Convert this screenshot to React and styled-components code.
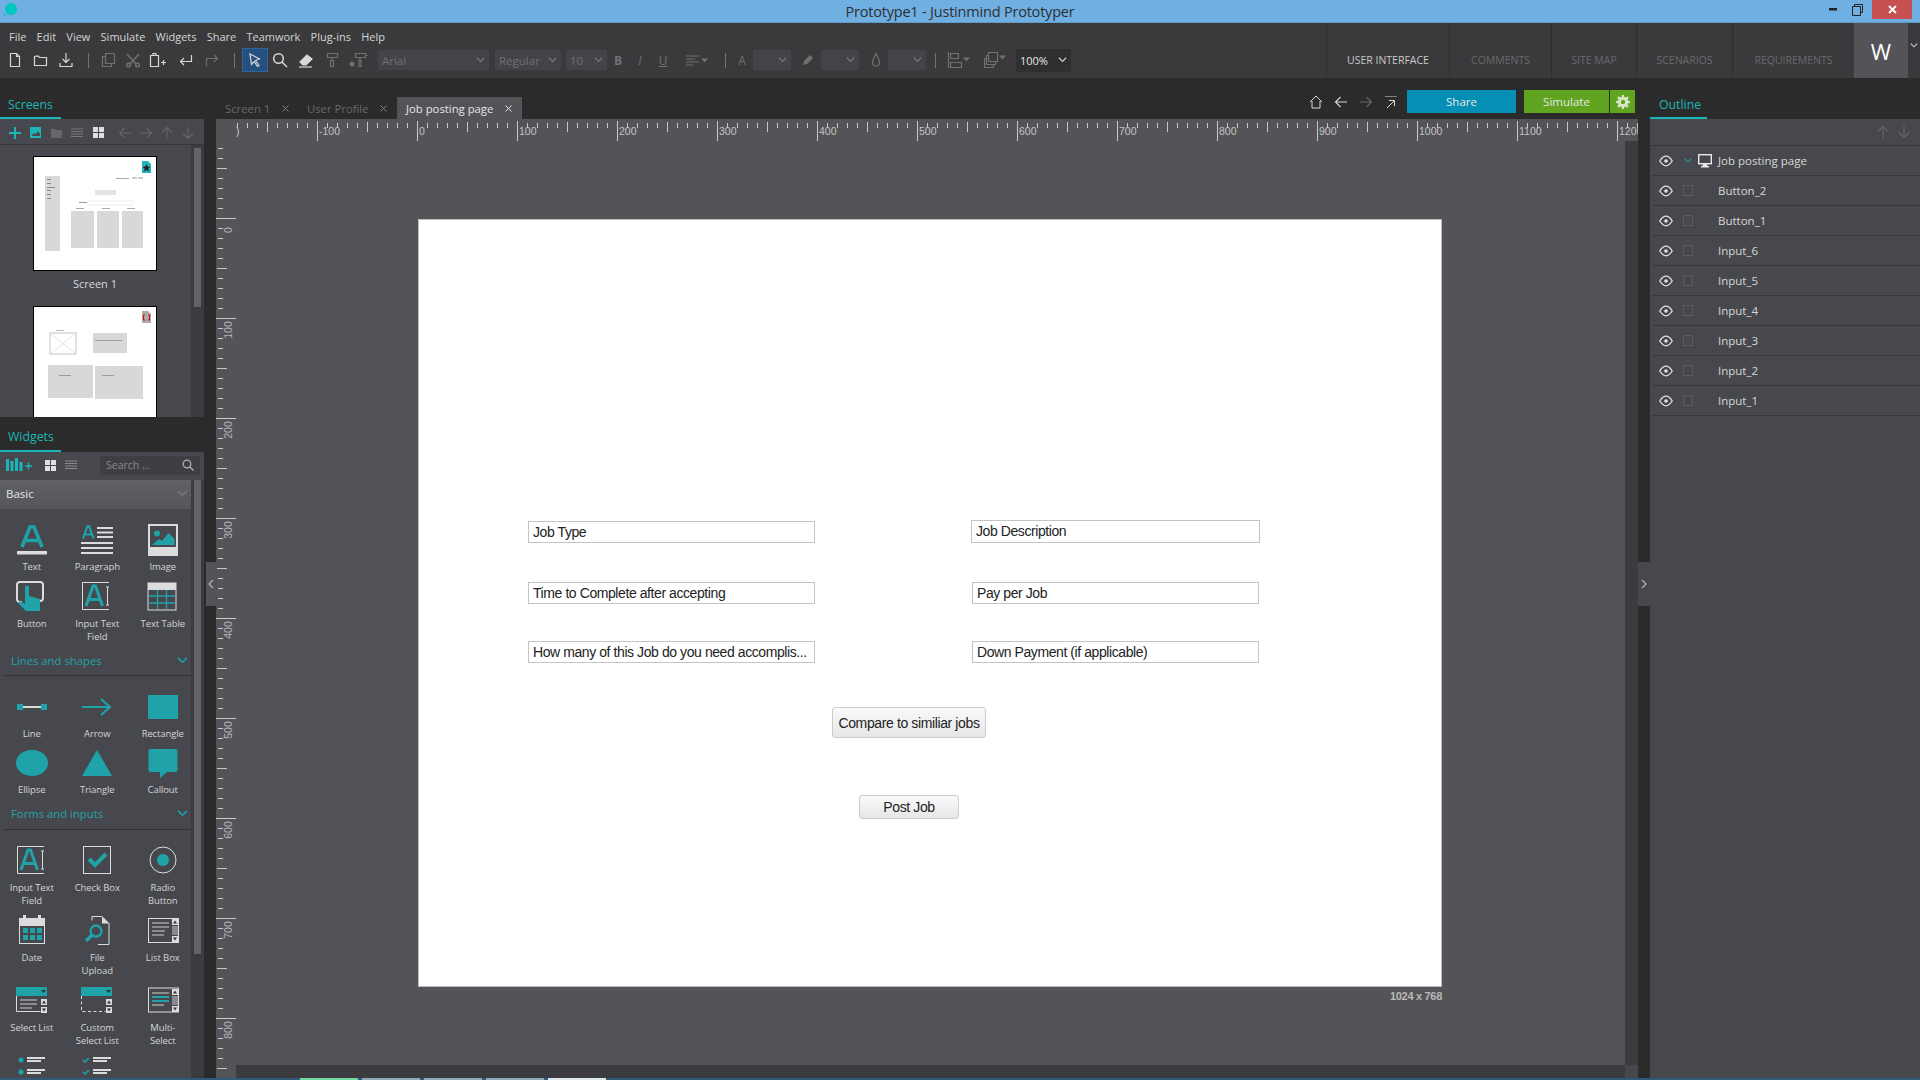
import React from "react";
import styled, { createGlobalStyle } from "styled-components";

const TEAL = "#1fa3a9";
const WHITE = "#dcdcdc";
const UI = `"Open Sans", "Noto Sans", sans-serif`;

const GlobalStyle = createGlobalStyle`
  html, body { margin: 0; padding: 0; background: #2b2b2b; }
  body { font-family: ${UI}; overflow: hidden; }
  * { box-sizing: border-box; }
`;

const Shell = styled.div`
  width: 1920px;
  height: 1080px;
  display: flex;
  flex-direction: column;
  overflow: hidden;
`;

/* ---- title bar ---- */
const TitleBar = styled.div`
  flex: none;
  height: 23px;
  background: #70afe2;
  border-bottom: 1px solid #5f9cc9;
  display: grid;
  grid-template-columns: 1fr auto 1fr;
  align-items: center;
`;
const AppLogo = styled.svg`
  display: block;
  margin-left: 2px;
`;
const TitleText = styled.div`
  font-size: 14.5px;
  color: #2e2e2e;
  letter-spacing: -0.2px;
`;
const WindowControls = styled.div`
  display: flex;
  justify-content: flex-end;
  align-self: start;
  margin-right: 8px;
`;
const WinBtn = styled.div`
  width: ${(p) => p.$w || 25}px;
  height: 19px;
  display: flex;
  align-items: center;
  justify-content: center;
  margin-left: ${(p) => p.$ml || 0}px;
  background: ${(p) => p.$close ? "#c75050" : "transparent"};
`;

/* ---- top bar ---- */
const TopBar = styled.div`
  flex: none;
  height: 55px;
  background: #3a3a3c;
  display: flex;
`;
const TopLeft = styled.div`
  flex: 1;
  min-width: 0;
`;
const MenuRow = styled.div`
  height: 24px;
  display: flex;
  align-items: center;
  padding: 2px 0 0 9px;
  gap: 10.2px;
  font-size: 11px;
  color: #d4d4d4;
`;
const ToolRow = styled.div`
  display: flex;
  align-items: center;
  height: 26px;
  padding-left: 2px;
`;
const ToolBtn = styled.div`
  flex: none;
  width: ${(p) => p.$w || 26}px;
  height: 24px;
  margin-left: ${(p) => p.$ml || 0}px;
  display: flex;
  align-items: center;
  justify-content: center;
  color: ${(p) => p.$off ? "#707073" : "#d8d8d8"};
  font-size: 12px;
  font-weight: ${(p) => p.$bold ? 700 : 400};
  font-style: ${(p) => p.$it ? "italic" : "normal"};
  background: ${(p) => p.$on ? "#25507f" : "transparent"};
  border: ${(p) => p.$on ? "1px solid #2f639b" : "none"};
`;
const ToolSep = styled.div`
  flex: none;
  width: ${(p) => p.$w || 16}px;
  margin-left: ${(p) => p.$ml || 0}px;
  height: 15px;
  position: relative;
  display: flex;
  justify-content: center;
  &::after { content: ""; width: 1px; height: 15px; background: #727275; }
`;
const Combo = styled.div`
  flex: none;
  width: ${(p) => p.$w}px;
  height: ${(p) => p.$dark ? 23 : 20}px;
  margin-left: ${(p) => p.$ml || 0}px;
  background: ${(p) => p.$dark ? "#2f2f31" : "#434448"};
  color: ${(p) => p.$dark ? "#e4e4e4" : "#6f7074"};
  font-size: ${(p) => p.$dark ? 11 : 11.5}px;
  display: flex;
  align-items: center;
  justify-content: space-between;
  padding: 0 4px;
`;
const NavTabs = styled.div`
  flex: none;
  display: flex;
`;
const NavTab = styled.div`
  width: ${(p) => p.$w}px;
  border-left: 1px solid #2e2e30;
  padding-top: 30px;
  text-align: center;
  font-size: 10.5px;
  white-space: nowrap;
  color: ${(p) => p.$active ? "#c9c9c9" : "#69696c"};
`;
const Workspace = styled.div`
  width: 54px;
  background: #545358;
  color: #fff;
  font-size: 22px;
  display: flex;
  align-items: center;
  justify-content: center;
`;
const NavChevron = styled.div`
  width: 12px;
  padding: 8px 0 0 2px;
`;

/* ---- main layout ---- */
const Main = styled.div`
  flex: 1;
  min-height: 0;
  display: flex;
  background: #2b2b2b;
`;
const LeftPanel = styled.div`
  flex: none;
  width: 204px;
  display: flex;
  flex-direction: column;
`;
const PanelTabBar = styled.div`
  flex: none;
  height: ${(p) => p.$h}px;
  background: #2b2b2b;
  display: flex;
  align-items: flex-end;
`;
const PanelTab = styled.div`
  width: ${(p) => p.$w}px;
  height: 26px;
  color: #1cb6b8;
  font-size: 12.3px;
  padding-left: ${(p) => p.$pl || 8}px;
  border-bottom: 2px solid #1cb6b8;
  line-height: ${(p) => p.$lh || 24}px;
`;
const SmallBar = styled.div`
  flex: none;
  height: ${(p) => p.$h || 26}px;
  background: #47484d;
  border-bottom: ${(p) => p.$line ? "1px solid #36363a" : "none"};
  padding: ${(p) => p.$pt || 0}px 0 ${(p) => p.$pb || 0}px;
  position: relative;
  display: flex;
  align-items: center;
`;
const BarIcon = styled.div`
  flex: none;
  width: ${(p) => p.$w || 21}px;
  margin-left: ${(p) => p.$ml || 0}px;
  display: flex;
  justify-content: center;
`;
const ScrollBody = styled.div`
  flex: ${(p) => p.$fill ? 1 : "none"};
  height: ${(p) => p.$h ? `${p.$h}px` : "auto"};
  min-height: 0;
  display: flex;
  background: #47484d;
  overflow: hidden;
`;
const ScrollContent = styled.div`
  width: 191px;
  flex: none;
  overflow: hidden;
`;
const ScrollTrack = styled.div`
  width: 13px;
  flex: none;
  background: #3c3c40;
  padding: ${(p) => p.$pt || 0}px 3px 0;
`;
const ScrollThumb = styled.div`
  width: 7px;
  height: ${(p) => p.$h}px;
  background: #626367;
`;

/* screens list */
const ThumbList = styled.div`
  padding: 11px 0 0 33px;
`;
const Thumb = styled.div`
  width: 124px;
  height: 115px;
  background: #fff;
  border: 1px solid #000;
  outline: 1px solid #000;
  outline-offset: -1px;
`;
const ThumbLabel = styled.div`
  width: 124px;
  height: 26px;
  margin-bottom: 9px;
  font-size: 11px;
  line-height: 26px;
  text-align: center;
  color: #d8d8d8;
`;

/* widgets */
const SearchBox = styled.div`
  flex: none;
  width: 100px;
  height: 19px;
  margin-left: 22px;
  background: #3e3f43;
  color: #8a8b8f;
  font-size: 10.5px;
  padding: 0 6px;
  display: flex;
  align-items: center;
  justify-content: space-between;
`;
const BasicHead = styled.div`
  height: 29px;
  background: linear-gradient(#5f6165, #55565a);
  color: #e4e4e4;
  font-size: 11.5px;
  display: flex;
  align-items: center;
  justify-content: space-between;
  padding: 0 3px 2px 6px;
`;
const SectionHead = styled.div`
  height: ${(p) => p.$h}px;
  margin-left: 4px;
  border-bottom: 1px solid #333437;
  color: ${TEAL};
  font-size: 11.3px;
  display: flex;
  justify-content: space-between;
  align-items: center;
  padding: 2px 3px 0 7px;
`;
const WidgetGrid = styled.div`
  display: grid;
  grid-template-columns: repeat(3, 65.5px);
  row-gap: 7px;
  padding-top: ${(p) => p.$pt}px;
  margin-left: -1px;
`;
const WidgetCell = styled.div`
  display: flex;
  flex-direction: column;
  align-items: center;
`;
const WidgetIcon = styled.svg`
  display: block;
  flex: none;
`;
const WidgetLabel = styled.div`
  margin-top: 4px;
  font-size: 9.5px;
  line-height: 13.5px;
  text-align: center;
  color: #d4d4d4;
  white-space: pre-line;
  letter-spacing: -0.1px;
`;

/* collapse handles */
const Gutter = styled.div`
  flex: none;
  width: 12px;
  background: #2b2b2b;
  position: relative;
`;
const Handle = styled.div`
  position: absolute;
  top: ${(p) => p.$top}px;
  left: ${(p) => p.$left}px;
  width: ${(p) => p.$w}px;
  height: 44px;
  background: ${(p) => p.$bg};
  display: flex;
  align-items: center;
  justify-content: center;
`;

/* centre */
const Centre = styled.div`
  flex: none;
  width: 1434px;
  display: flex;
  flex-direction: column;
  position: relative;
`;
const TabStrip = styled.div`
  flex: none;
  height: 41px;
  display: flex;
  align-items: flex-end;
  padding-right: 15px;
`;
const DocTab = styled.div`
  flex: none;
  width: ${(p) => p.$w}px;
  height: 22px;
  display: flex;
  align-items: center;
  padding-left: 9px;
  font-size: 11.3px;
  background: ${(p) => p.$active ? "#545358" : "transparent"};
  color: ${(p) => p.$active ? "#e6e6e6" : "#69696c"};
`;
const DocClose = styled.span`
  margin-left: ${(p) => p.$ml}px;
  display: flex;
`;
const StripTools = styled.div`
  margin-left: auto;
  align-self: stretch;
  display: flex;
  align-items: center;
  padding-top: 6px;
`;
const StripIcon = styled.div`
  width: 25px;
  display: flex;
  justify-content: center;
`;
const ActionBtn = styled.div`
  width: ${(p) => p.$w}px;
  height: 23px;
  margin-left: ${(p) => p.$ml || 0}px;
  background: ${(p) => p.$bg};
  color: #e6e6e6;
  font-size: 11.5px;
  display: flex;
  align-items: center;
  justify-content: center;
`;
const CanvasGrid = styled.div`
  flex: 1;
  min-height: 0;
  margin-right: 12px;
  display: grid;
  grid-template-columns: 20px 1fr 13px;
  grid-template-rows: 22px 1fr 13px;
  background: #545358;
`;
const HRuler = styled.svg`
  grid-column: 1 / 4;
  grid-row: 1;
  display: block;
  font-family: "Liberation Sans", sans-serif;
  font-size: 10.5px;
`;
const VRuler = styled.svg`
  grid-column: 1;
  grid-row: 2 / 4;
  display: block;
  font-family: "Liberation Sans", sans-serif;
  font-size: 10.5px;
`;
const Stage = styled.div`
  grid-column: 2;
  grid-row: 2;
  overflow: hidden;
  padding: 78px 0 0 182px;
`;
const VScroll = styled.div`
  grid-column: 3;
  grid-row: 2;
  background: #3c3c40;
`;
const HScroll = styled.div`
  grid-column: 2;
  grid-row: 3;
  background: #3c3c40;
`;
const ScrollCorner = styled.div`
  grid-column: 3;
  grid-row: 3;
  background: #47484d;
`;
const Page = styled.div`
  position: relative;
  width: 1024px;
  height: 768px;
  background: #fff;
  box-shadow: inset 0 0 0 1px #bdbdbd;
`;
const PageSize = styled.div`
  width: 1024px;
  margin-top: 3px;
  text-align: right;
  font-family: "Liberation Sans", sans-serif;
  font-size: 11px;
  font-weight: 700;
  color: #b9b9b9;
  letter-spacing: -0.3px;
`;
const Field = styled.div`
  position: absolute;
  left: ${(p) => p.$x}px;
  top: ${(p) => p.$y}px;
  width: ${(p) => p.$w}px;
  height: ${(p) => p.$h || 22}px;
  border: 1px solid #c4c4c4;
  background: #fff;
  color: #222;
  font-family: "Liberation Sans", sans-serif;
  font-size: 14px;
  letter-spacing: -0.42px;
  line-height: 21px;
  padding: 0 4px;
  white-space: nowrap;
  overflow: hidden;
`;
const PageButton = styled.div`
  position: absolute;
  left: ${(p) => p.$x}px;
  top: ${(p) => p.$y}px;
  width: ${(p) => p.$w}px;
  height: ${(p) => p.$h}px;
  border: 1px solid #cdcdcd;
  border-radius: 3px;
  background: linear-gradient(#fafafa, #e6e6e6);
  color: #222;
  font-family: "Liberation Sans", sans-serif;
  font-size: 14px;
  letter-spacing: -0.38px;
  display: flex;
  align-items: center;
  justify-content: center;
  white-space: nowrap;
`;

/* right panel */
const RightPanel = styled.div`
  flex: none;
  width: 270px;
  display: flex;
  flex-direction: column;
`;
const OutlineBody = styled.div`
  flex: 1;
  background: #47484d;
  padding-left: 3px;
`;
const OutlineRow = styled.div`
  height: 30px;
  border-bottom: 1px solid #37373a;
  display: flex;
  align-items: center;
  font-size: 11.5px;
  color: #d8d8d8;
`;
const EyeSlot = styled.div`
  width: 20px;
  margin-left: 3px;
  display: flex;
  justify-content: center;
`;
const MarkSlot = styled.div`
  width: 19px;
  margin-left: 2px;
  display: flex;
  justify-content: center;
`;
const KindSlot = styled.div`
  width: 21px;
  padding-right: 6px;
  display: flex;
  justify-content: center;
`;
const CheckMark = styled.div`
  width: 10px;
  height: 11px;
  border: 1px solid #5a5b60;
`;

const TaskStrip = styled.div`
  flex: none;
  height: 2px;
  background: #2f5a78;
  display: flex;
  padding-left: 300px;
  gap: 4px;
`;
const TaskItem = styled.div`
  width: 58px;
  background: ${(p) => p.$c};
`;

/* ---- drawings ---- */
const Ico = ({ w = 16, h = 16, children, sw = 1.2 }) => (
  <svg width={w} height={h} viewBox={`0 0 ${w} ${h}`} fill="none" stroke="currentColor" strokeWidth={sw}>
    {children}
  </svg>
);
const Chev = ({ c = "#77787c", s = 9 }) => (
  <svg width={s} height={s * 0.6} viewBox="0 0 10 6" fill="none" stroke={c} strokeWidth="1.3">
    <path d="M1 .8l4 4 4-4" />
  </svg>
);
const Cross = ({ c = "#7d7d80" }) => (
  <svg width="7" height="7" viewBox="0 0 7 7" stroke={c} strokeWidth="1"><path d="M.5.5l6 6M6.500.5l-6 6" /></svg>
);

const NewIcon = () => <Ico><path d="M3.500 1.500h6l3 3v10h-9z M9.500 1.500v3h3" /></Ico>;
const OpenIcon = () => <Ico><path d="M2.500 4.500v9h12v-8h-7l-1.500-1.500z" /></Ico>;
const SaveIcon = () => <Ico><path d="M8 1v9M4.500 7L8 10.500 11.500 7M2 11v3.500h12V11" /></Ico>;
const CopyIcon = () => <Ico><path d="M5.500 1.500h9v10h-9zM5.500 4.500h-3v10h9v-3" /></Ico>;
const CutIcon = () => <Ico sw={1.6}><path d="M2 2l9 10M14 2L5 12" /><circle cx="3.500" cy="13" r="1.800" /><circle cx="12.500" cy="13" r="1.800" /></Ico>;
const PasteIcon = () => <Ico w={18}><path d="M2.500 3.500h8v11h-8zM5 3.500V1.500h3v2M13 10.500h5M15.500 8v5" /></Ico>;
const EnterIcon = () => <Ico><path d="M13.500 3v6.500H2.500M6 6L2.500 9.500 6 13" /></Ico>;
const RedoIcon = () => <Ico><path d="M2.500 14V6.500h11M10 3l3.500 3.500L10 10" /></Ico>;
const SelectIcon = () => <Ico><path d="M3 2l9.500 5-4 1.500 3.500 5-1.500 1-3.300-5L4.500 12.500z" /></Ico>;
const ZoomIcon = () => <Ico sw={1.5}><circle cx="6.500" cy="6.500" r="4.800" /><path d="M10 10l5 5" /></Ico>;
const EraserIcon = () => (
  <Ico><path d="M2 10l7-7 5 4-6 6H5z" fill="currentColor" /><path d="M1 15h13" /></Ico>
);
const RollerIcon = () => <Ico><path d="M3.500 1.500h10v4h-10zM8 5.500v2.500M6.500 8.500h3v6h-3z" /></Ico>;
const FormatIcon = () => (
  <Ico w={20}><path d="M7.500 1.500h10v4h-10zM17.500 3.500h2M12 5.500v2.500M11 8.500h2v6h-2z" /><circle cx="4" cy="12" r="2.500" fill="currentColor" stroke="none" /></Ico>
);
const AlignIcon = () => (
  <Ico w={24}><path d="M1 4h13M1 7h9M1 10h13M1 13h7" /><path d="M16 6.500h7l-3.500 4z" fill="currentColor" stroke="none" /></Ico>
);
const PencilIcon = () => <Ico sw={2}><path d="M3 13l1-4 6-6 3 3-6 6z" fill="currentColor" stroke="none" /></Ico>;
const DropIcon = () => <Ico><path d="M8 1.500C6 5.500 4.500 8 4.500 10.500a3.500 3.500 0 0 0 7 0C11.500 8 10 5.500 8 1.500z" /></Ico>;
const DistribIcon = () => (
  <Ico w={24} h={18}><path d="M1.500 1v16M3.500 2.500h8v5h-8zM3.500 11.500h11v5h-11z" /><path d="M16 6.500h7l-3.500 4z" fill="currentColor" stroke="none" /></Ico>
);
const LayersIcon = () => (
  <Ico w={24} h={18}><path d="M5.500 1.500h9v9h-9zM5.500 4.500h-2v9h9v-3M3.500 7.500h-2v9h9v-3" /><path d="M16 4.500h7l-3.500 4z" fill="currentColor" stroke="none" /></Ico>
);
const ArrowIcon = ({ dir = "left", s = 14 }) => {
  const r = { left: 0, up: 90, right: 180, down: 270 }[dir];
  return (
    <svg width={s} height={s} viewBox="0 0 14 14" fill="none" stroke="currentColor" strokeWidth="1.1" style={{ transform: `rotate(${r}deg)` }}>
      <path d="M13 7H1.500M6.500 2L1.500 7l5 5" />
    </svg>
  );
};
const HomeIcon = () => <Ico sw={1}><path d="M2 8l6-6 6 6M4 7v7h8V7" /></Ico>;
const EndIcon = () => <Ico sw={1}><path d="M2.500 2.500h11" strokeDasharray="1 1" /><path d="M4 14L11 7M6 6.500h5.500V12" /></Ico>;
const GearIcon = () => (
  <svg width="14" height="14" viewBox="0 0 14 14" fill="#d9e6c8">
    <path d="M6 0h2l.3 2 1.300.6L11.300 1.400l1.400 1.400-1.200 1.700.5 1.300L14 6v2l-2 .3-.5 1.300 1.200 1.700-1.400 1.400-1.700-1.200-1.300.5L8 14H6l-.3-2-1.300-.5-1.700 1.200-1.400-1.400 1.200-1.700L2 8.300 0 8V6l2-.3.5-1.300-1.200-1.700 1.400-1.400 1.700 1.200L5.700 2z" />
    <circle cx="7" cy="7" r="2.200" fill="#60a41f" />
  </svg>
);
const EyeIcon = () => (
  <svg width="14" height="12" viewBox="0 0 14 12" fill="none" stroke="#e4e4e4" strokeWidth="1.300">
    <path d="M.8 6C3 2.500 5 1.200 7 1.200S11 2.500 13.200 6C11 9.500 9 10.800 7 10.800S3 9.500.8 6z" />
    <circle cx="7" cy="6" r="1.800" fill="#e4e4e4" stroke="none" />
  </svg>
);
const MonitorIcon = () => (
  <svg width="14" height="14" viewBox="0 0 14 14" fill="none">
    <rect x=".7" y=".7" width="12.600" height="9" stroke="#e8e8e8" strokeWidth="1.400" />
    <path d="M5 10h4l.5 2H11v1.500H3V12h1.500z" fill="#e8e8e8" />
  </svg>
);

const Doc = ({ fill, children }) => (
  <g>
    <path d={`M108 4h6l3 3v9h-9z`} fill={fill} />
    {children}
  </g>
);
const ThumbOne = () => (
  <svg width="122" height="113" viewBox="0 0 122 113">
    <rect x="11" y="19" width="15" height="75" fill="#d8d8d8" />
    {[22, 26, 30, 33, 37, 41].map((y, i) => <rect key={y} x="13" y={y} width={i === 2 ? 8 : 4} height="1" fill="#888" />)}
    <rect x="82" y="21" width="13" height="1" fill="#aaa" />
    <rect x="98" y="20" width="5" height="2" fill="#ccc" />
    <rect x="104" y="20" width="5" height="2" fill="#ccc" />
    <rect x="61" y="33" width="21" height="5" fill="#e4e4e4" />
    <rect x="45" y="45" width="8" height="1" fill="#999" />
    <rect x="54" y="44" width="44" height="4" fill="#fff" stroke="#ddd" strokeWidth=".5" />
    {[[37, 23], [63, 22], [88, 21]].map(([x, w]) => (
      <g key={x}>
        <rect x={x + 5} y="51" width="8" height="1" fill="#aaa" />
        <rect x={x} y="54" width={w} height="37" fill="#d8d8d8" />
      </g>
    ))}
    <Doc fill="#1fb5bb"><path d="M112.500 7l1.200 2.600 2.600.3-2 1.800.6 2.700-2.400-1.400-2.400 1.400.6-2.700-2-1.800 2.600-.3z" fill="#222" /></Doc>
  </svg>
);
const ThumbTwo = () => (
  <svg width="122" height="113" viewBox="0 0 122 113">
    <g stroke="#d8d8d8" fill="none">
      <rect x="16" y="26" width="26" height="21" strokeWidth="1.500" />
      <path d="M16 26l26 21M42 26L16 47" strokeWidth=".7" />
    </g>
    <rect x="22" y="23" width="8" height="1" fill="#bbb" />
    <rect x="59" y="26" width="34" height="20" fill="#d8d8d8" />
    <rect x="61" y="33" width="27" height="1" fill="#999" />
    <rect x="14" y="58" width="45" height="33" fill="#d8d8d8" />
    <rect x="61" y="59" width="48" height="33" fill="#d8d8d8" />
    <rect x="25" y="68" width="12" height="1" fill="#999" />
    <rect x="68" y="68" width="12" height="1" fill="#999" />
    <Doc fill="#a9abab"><path d="M111 8h-1.500v5h1.500M114 8h1.500v5H114" stroke="#e00" strokeWidth="1" fill="none" /></Doc>
  </svg>
);

const teal = { fill: TEAL, stroke: "none" };
const white = { fill: WHITE, stroke: "none" };

const InputGlyph = (
  <g>
    <path d="M28 1.500H1.500v27H28" stroke={WHITE} fill="none" />
    <path d="M5 25L12 5h2.500l7 20M8 18.500h11" stroke={TEAL} strokeWidth="3" fill="none" />
    <path d="M25 6h3M25 24h3M26.500 6v18" stroke={WHITE} fill="none" />
  </g>
);
const bars = (x, ys, w) => ys.map((y, i) => <rect key={y} x={x} y={y} width={w[i % w.length]} height="2" fill="#8a8b8e" />);
const ScrollGlyph = ({ x, y, thumb }) => (
  <g>
    <rect x={x} y={y} width="6" height="6" {...white} />
    <path d={`M${x + 1} ${y + 4.500}h4l-2-3z`} fill="#333" />
    {thumb && <rect x={x} y={y + 7} width="6" height="9" fill="#8a8b8e" />}
    <rect x={x} y={y + (thumb ? 17 : 8)} width="6" height="6" {...white} />
    <path d={`M${x + 1} ${y + (thumb ? 18.500 : 9.500)}h4l-2 3z`} fill="#333" />
  </g>
);

const glyphs = {
  Text: <g><path d="M6 23L14 3h4l8 20M9.500 16.500h13" stroke={TEAL} strokeWidth="3.500" fill="none" /><rect x="1" y="27" width="30" height="3.500" {...white} /></g>,
  Paragraph: (
    <g>
      <path d="M2 14.500L6.500 2h1.500l4.500 12.500M4 10.500h7" stroke={TEAL} strokeWidth="2.200" fill="none" />
      {[3, 7.500, 12].map((y) => <rect key={y} x="16" y={y} width="16" height="2" {...white} />)}
      {[18, 23, 28].map((y) => <rect key={y} x="0" y={y} width="32" height="2" {...white} />)}
    </g>
  ),
  Image: (
    <g>
      <rect x="1" y="0" width="30" height="32" {...white} />
      <rect x="3" y="2" width="26" height="21" fill="#47484d" />
      <circle cx="10" cy="9.500" r="3" {...teal} />
      <path d="M5 21l7-6 3 2 6.500-8 6 6v6z" {...teal} />
    </g>
  ),
  Button: (
    <g>
      <path d="M6 21H4a3 3 0 0 1-3-3V4a3 3 0 0 1 3-3h20a3 3 0 0 1 3 3v13a3 3 0 0 1-3 3h-2" stroke={WHITE} strokeWidth="2" fill="none" />
      <path d="M9 6.500a2 2 0 0 1 4 0V15l11 3v12H10l-8-8 2-2 5 3z" {...teal} />
    </g>
  ),
  "Input Text\nField": InputGlyph,
  "Text Table": (
    <g>
      <rect x="1" y="2" width="28" height="27" fill="none" stroke={WHITE} />
      <rect x="1" y="2" width="28" height="7" {...white} />
      <path d="M2 15h26M2 22h26M10.500 9v19M19.500 9v19" stroke={TEAL} strokeWidth="1.300" />
    </g>
  ),
  Line: <g><rect x="1" y="13" width="6" height="6" {...teal} /><rect x="7" y="15" width="18" height="2" {...white} /><rect x="25" y="13" width="6" height="6" {...teal} /></g>,
  Arrow: <path d="M1 16h28M20 8l9 8-9 8" stroke={TEAL} strokeWidth="2" fill="none" />,
  Rectangle: <rect x="1" y="4" width="30" height="24" {...teal} />,
  Ellipse: <ellipse cx="16" cy="16" rx="16" ry="13" {...teal} />,
  Triangle: <path d="M16 3L31 29H1z" {...teal} />,
  Callout: <path d="M4 2h24a2.500 2.500 0 0 1 2.500 2.500v18a2.500 2.500 0 0 1-2.500 2.500H20l-7 6v-6H4a2.500 2.500 0 0 1-2.500-2.500v-18A2.500 2.500 0 0 1 4 2z" {...teal} />,
  "Check Box": <g><rect x="2.500" y="1.500" width="27" height="27" stroke={WHITE} fill="none" /><path d="M8 14l6 6 11-11" stroke={TEAL} strokeWidth="4" fill="none" /></g>,
  "Radio\nButton": <g><circle cx="16" cy="15" r="13" stroke={WHITE} fill="none" /><circle cx="16" cy="15" r="6" {...teal} /></g>,
  Date: (
    <g>
      <rect x="3.500" y="3.500" width="25" height="25" stroke={WHITE} fill="none" />
      <rect x="3" y="3" width="26" height="8" {...white} />
      <rect x="7" y="0" width="3" height="5" {...white} /><rect x="22" y="0" width="3" height="5" {...white} />
      {[7, 14, 21].map((x) => [13, 20].map((y) => <rect key={x + "-" + y} x={x} y={y} width="5" height="5" {...teal} />))}
    </g>
  ),
  "File\nUpload": (
    <g>
      <path d="M11 1.500h10l7 7v21H17M11 1.500v4" stroke={WHITE} fill="none" />
      <path d="M21 1.500l7 7h-7z" {...white} />
      <circle cx="15" cy="16" r="5.500" stroke={TEAL} strokeWidth="2.300" fill="none" />
      <path d="M11 20l-6 6" stroke={TEAL} strokeWidth="3.500" />
    </g>
  ),
  "List Box": (
    <g>
      <rect x="1.500" y="3.500" width="30" height="24" stroke={WHITE} fill="none" />
      {bars(5, [7, 11, 15, 19], [17, 17, 13, 12])}
      <ScrollGlyph x={25} y={4} thumb />
    </g>
  ),
  "Select List": (
    <g>
      <rect x="0" y="2" width="31" height="9" {...teal} />
      <path d="M25 5h5l-2.500 3z" fill="#333" />
      <path d="M.5 11v15.500h24" stroke={WHITE} fill="none" />
      {bars(4, [14, 18, 22], [17, 17, 12])}
      <ScrollGlyph x={25} y={14} />
    </g>
  ),
  "Custom\nSelect List": (
    <g>
      <rect x="0" y="2" width="31" height="9" {...teal} />
      <path d="M25 5h5l-2.500 3z" fill="#333" />
      <path d="M.5 11v15.500h24" stroke={WHITE} strokeDasharray="3 2.500" fill="none" />
      <ScrollGlyph x={25} y={14} />
    </g>
  ),
  "Multi-\nSelect": (
    <g>
      <rect x="1.500" y="3" width="30" height="24" stroke={WHITE} fill="none" />
      <rect x="5" y="7" width="17" height="2" fill="#8a8b8e" />
      <rect x="5" y="11" width="17" height="2" {...teal} />
      <rect x="5" y="15" width="17" height="2" {...teal} />
      <rect x="5" y="19" width="12" height="2" fill="#8a8b8e" />
      <ScrollGlyph x={25} y={4} thumb />
    </g>
  ),
  Bullets: (
    <g>
      {[2, 14, 26].map((y) => (
        <g key={y}>
          <circle cx="5" cy={y + 3} r="2.500" {...teal} />
          <rect x="11" y={y} width="18" height="2" {...white} />
          <rect x="11" y={y + 3} width="14" height="2" {...white} />
        </g>
      ))}
    </g>
  ),
  Checks: (
    <g>
      {[2, 14, 26].map((y) => (
        <g key={y}>
          <path d={`M2 ${y + 3}l2 2 4-4`} stroke={TEAL} strokeWidth="1.500" fill="none" />
          <rect x="12" y={y} width="18" height="2" {...white} />
          <rect x="12" y={y + 3} width="14" height="2" {...white} />
        </g>
      ))}
    </g>
  ),
};

const Widget = ({ name, noLabel }) => (
  <WidgetCell>
    <WidgetIcon width="32" height="32" viewBox="0 0 32 32">{glyphs[name]}</WidgetIcon>
    {!noLabel && <WidgetLabel>{name}</WidgetLabel>}
  </WidgetCell>
);

const range = (from, to, step) => {
  const out = [];
  for (let v = from; v <= to; v += step) out.push(v);
  return out;
};

// x/y of the ruler zero, inside each ruler's own svg
const HorizontalRuler = () => (
  <HRuler width="1422" height="22" viewBox="0 0 1422 22">
    {range(-180, 1220, 10).map((v) => {
      const x = v + 201.5;
      const major = v % 100 === 0;
      const mid = v % 50 === 0;
      if (x < 20) return null;
      return <line key={v} x1={x} x2={x} y1={major ? 2 : mid ? 3 : 4} y2={major ? 22 : mid ? 13 : 9} stroke="#c9c9c9" />;
    })}
    {range(-100, 1200, 100).map((v) => (
      <text key={v} x={v + 203} y="16" fill="#c4c4c4">{v}</text>
    ))}
    <text x="20" y="16" fill="#c4c4c4">)</text>
  </HRuler>
);
const VerticalRuler = () => (
  <VRuler width="20" height="937" viewBox="0 0 20 937">
    {range(-70, 860, 10).map((v) => {
      const y = v + 77.5;
      const major = v % 100 === 0;
      const mid = v % 50 === 0;
      return <line key={v} x1={major ? 0 : mid ? 1 : 2} x2={major ? 20 : mid ? 11 : 7} y1={y} y2={y} stroke="#c9c9c9" />;
    })}
    {range(0, 800, 100).map((v) => (
      <text key={v} transform={`translate(16 ${v + 89}) rotate(-90)`} textAnchor="middle" fill="#b8b8b8">{v}</text>
    ))}
  </VRuler>
);

const outline = ["Button_2", "Button_1", "Input_6", "Input_5", "Input_4", "Input_3", "Input_2", "Input_1"];

const fields = [
  { x: 110, y: 302, w: 287, text: "Job Type" },
  { x: 553, y: 301, w: 289, h: 23, text: "Job Description" },
  { x: 110, y: 363, w: 287, text: "Time to Complete after accepting" },
  { x: 554, y: 363, w: 287, text: "Pay per Job" },
  { x: 110, y: 422, w: 287, text: "How many of this Job do you need accomplis..." },
  { x: 554, y: 422, w: 287, text: "Down Payment (if applicable)" },
];

export default function App() {
  return (
    <Shell>
      <GlobalStyle />
      <TitleBar>
        <AppLogo width="18" height="18" viewBox="0 0 18 18">
          <circle cx="9" cy="7" r="6" fill="#00c6c0" />
          <circle cx="2.500" cy="13" r="1" fill="#00c6c0" />
        </AppLogo>
        <TitleText>Prototype1 - Justinmind Prototyper</TitleText>
        <WindowControls>
          <WinBtn>
            <svg width="8" height="3" viewBox="0 0 8 3"><rect width="8" height="2.500" fill="#222" /></svg>
          </WinBtn>
          <WinBtn>
            <svg width="11" height="12" viewBox="0 0 11 12" fill="none" stroke="#222"><path d="M2.500 2.500V.5h8v8H8.500M.5 2.500h8v9h-8z" /></svg>
          </WinBtn>
          <WinBtn $close $w={40} $ml={2}>
            <svg width="9" height="9" viewBox="0 0 9 9" stroke="#fff" strokeWidth="1.800"><path d="M1 1l7 7M8 1L1 8" /></svg>
          </WinBtn>
        </WindowControls>
      </TitleBar>

      <TopBar>
        <TopLeft>
          <MenuRow>
            {["File", "Edit", "View", "Simulate", "Widgets", "Share", "Teamwork", "Plug-ins", "Help"].map((m) => <span key={m}>{m}</span>)}
          </MenuRow>
          <ToolRow>
            <ToolBtn $w={26}><NewIcon /></ToolBtn>
            <ToolBtn $w={24}><OpenIcon /></ToolBtn>
            <ToolBtn $w={28}><SaveIcon /></ToolBtn>
            <ToolSep />
            <ToolBtn $w={24} $off><CopyIcon /></ToolBtn>
            <ToolBtn $w={26} $off><CutIcon /></ToolBtn>
            <ToolBtn $w={22}><PasteIcon /></ToolBtn>
            <ToolBtn $w={36}><EnterIcon /></ToolBtn>
            <ToolBtn $w={16} $off><RedoIcon /></ToolBtn>
            <ToolSep $ml={6} />
            <ToolBtn $w={26} $on><SelectIcon /></ToolBtn>
            <ToolBtn $w={24}><ZoomIcon /></ToolBtn>
            <ToolBtn $w={28}><EraserIcon /></ToolBtn>
            <ToolBtn $w={24} $off><RollerIcon /></ToolBtn>
            <ToolBtn $w={28} $off><FormatIcon /></ToolBtn>
            <Combo $w={111} $ml={6}>Arial<Chev /></Combo>
            <Combo $w={66} $ml={6}>Regular<Chev /></Combo>
            <Combo $w={41} $ml={5}>10<Chev /></Combo>
            <ToolBtn $w={22} $off $bold>B</ToolBtn>
            <ToolBtn $w={22} $off $it>I</ToolBtn>
            <ToolBtn $w={24} $off><span style={{ textDecoration: "underline" }}>U</span></ToolBtn>
            <ToolBtn $w={44} $off><AlignIcon /></ToolBtn>
            <ToolSep $w={12} />
            <ToolBtn $w={22} $off>A</ToolBtn>
            <Combo $w={38}><span /><Chev /></Combo>
            <ToolBtn $w={26} $ml={4} $off><PencilIcon /></ToolBtn>
            <Combo $w={38}><span /><Chev /></Combo>
            <ToolBtn $w={24} $ml={5} $off><DropIcon /></ToolBtn>
            <Combo $w={38}><span /><Chev /></Combo>
            <ToolSep $w={18} />
            <ToolBtn $w={30} $off><DistribIcon /></ToolBtn>
            <ToolBtn $w={42} $off><LayersIcon /></ToolBtn>
            <Combo $w={55} $dark>100%<Chev c="#d0d0d0" /></Combo>
          </ToolRow>
        </TopLeft>
        <NavTabs>
          <NavTab $w={123} $active>USER INTERFACE</NavTab>
          <NavTab $w={102}>COMMENTS</NavTab>
          <NavTab $w={85}>SITE MAP</NavTab>
          <NavTab $w={96}>SCENARIOS</NavTab>
          <NavTab $w={122}>REQUIREMENTS</NavTab>
          <Workspace>W</Workspace>
          <NavChevron><Chev c="#c8c8c8" s={8} /></NavChevron>
        </NavTabs>
      </TopBar>

      <Main>
        <LeftPanel>
          <PanelTabBar $h={41}><PanelTab $w={61}>Screens</PanelTab></PanelTabBar>
          <SmallBar $line $pt={2}>
            <BarIcon $w={19} $ml={5} style={{ color: "#1cb6b8" }}>
              <Ico sw={2}><path d="M8 2v12M2 8h12" /></Ico>
            </BarIcon>
            <BarIcon $w={22}>
              <svg width="11" height="11" viewBox="0 0 11 11"><rect width="11" height="11" fill="#1cb6b8" /><path d="M1 9l3-3 2 1 2-3 2 3v2z" fill="#47484d" /></svg>
            </BarIcon>
            <BarIcon $w={20}>
              <svg width="11" height="10" viewBox="0 0 11 10"><path d="M0 1h4l1 1h6v8H0z" fill="#66676b" /></svg>
            </BarIcon>
            <BarIcon $w={21} style={{ color: "#77787c" }}>
              <Ico w={12} h={10} sw={1}><path d="M0 1h12M0 3.500h12M0 6h12M0 8.500h12" /></Ico>
            </BarIcon>
            <BarIcon $w={22}>
              <svg width="11" height="11" viewBox="0 0 11 11" fill="#e0e0e0"><rect width="5" height="5" /><rect x="6" width="5" height="5" /><rect y="6" width="5" height="5" /><rect x="6" y="6" width="5" height="5" /></svg>
            </BarIcon>
            {["left", "right", "up", "down"].map((d, i) => (
              <BarIcon key={d} $w={21} $ml={i === 0 ? 5 : 0} style={{ color: "#66676b" }}><ArrowIcon dir={d} /></BarIcon>
            ))}
          </SmallBar>
          <ScrollBody $h={272}>
            <ScrollContent>
              <ThumbList>
                <Thumb><ThumbOne /></Thumb>
                <ThumbLabel>Screen 1</ThumbLabel>
                <Thumb><ThumbTwo /></Thumb>
              </ThumbList>
            </ScrollContent>
            <ScrollTrack $pt={3}><ScrollThumb $h={159} /></ScrollTrack>
          </ScrollBody>

          <PanelTabBar $h={35}><PanelTab $w={61} $lh={22}>Widgets</PanelTab></PanelTabBar>
          <SmallBar $h={28} $pb={2}>
            <BarIcon $w={28} $ml={5}>
              <svg width="26" height="14" viewBox="0 0 26 14" fill="#1cb6b8">
                <rect y="1" width="3" height="12" /><rect x="4.500" y="3" width="3" height="10" /><rect x="9" width="3" height="13" /><rect x="13.500" y="4" width="3" height="9" />
                <path d="M19 8h7M22.500 4.500v7" stroke="#1cb6b8" strokeWidth="1.300" />
              </svg>
            </BarIcon>
            <BarIcon $w={28} $ml={3}>
              <svg width="11" height="11" viewBox="0 0 11 11" fill="#e0e0e0"><rect width="5" height="5" /><rect x="6" width="5" height="5" /><rect y="6" width="5" height="5" /><rect x="6" y="6" width="5" height="5" /></svg>
            </BarIcon>
            <BarIcon $w={14} style={{ color: "#8a8b8f" }}>
              <Ico w={12} h={10} sw={1}><path d="M0 1h12M0 3.500h12M0 6h12M0 8.500h12" /></Ico>
            </BarIcon>
            <SearchBox>
              Search ...
              <svg width="12" height="12" viewBox="0 0 12 12" fill="none" stroke="#b0b0b0" strokeWidth="1.300"><circle cx="5" cy="5" r="3.800" /><path d="M8 8l3.500 3.500" /></svg>
            </SearchBox>
          </SmallBar>
          <ScrollBody $fill>
            <ScrollContent>
              <BasicHead>Basic<Chev s={11} /></BasicHead>
              <WidgetGrid $pt={15}>
                {["Text", "Paragraph", "Image", "Button", "Input Text\nField", "Text Table"].map((n) => <Widget key={n} name={n} />)}
              </WidgetGrid>
              <SectionHead $h={32}>Lines and shapes<Chev c={TEAL} s={11} /></SectionHead>
              <WidgetGrid $pt={15}>
                {["Line", "Arrow", "Rectangle", "Ellipse", "Triangle", "Callout"].map((n) => <Widget key={n} name={n} />)}
              </WidgetGrid>
              <SectionHead $h={33}>Forms and inputs<Chev c={TEAL} s={11} /></SectionHead>
              <WidgetGrid $pt={15}>
                {["Input Text\nField", "Check Box", "Radio\nButton", "Date", "File\nUpload", "List Box", "Select List", "Custom\nSelect List", "Multi-\nSelect"].map((n) => <Widget key={n} name={n} />)}
                <Widget name="Bullets" noLabel />
                <Widget name="Checks" noLabel />
              </WidgetGrid>
            </ScrollContent>
            <ScrollTrack><ScrollThumb $h={474} /></ScrollTrack>
          </ScrollBody>
        </LeftPanel>

        <Gutter>
          <Handle $top={484} $left={2} $w={10} $bg="#545358">
            <svg width="6" height="10" viewBox="0 0 6 10" fill="none" stroke="#b5b5b5" strokeWidth="1.200"><path d="M5 1L1 5l4 4" /></svg>
          </Handle>
        </Gutter>

        <Centre>
          <TabStrip>
            <DocTab $w={82}>Screen 1<DocClose $ml={12}><Cross /></DocClose></DocTab>
            <DocTab $w={99}>User Profile<DocClose $ml={11}><Cross /></DocClose></DocTab>
            <DocTab $w={125} $active>Job posting page<DocClose $ml={12}><Cross c="#e0e0e0" /></DocClose></DocTab>
            <StripTools>
              <StripIcon style={{ color: "#d8d8d8" }}><HomeIcon /></StripIcon>
              <StripIcon style={{ color: "#d8d8d8" }}><ArrowIcon /></StripIcon>
              <StripIcon style={{ color: "#66676b" }}><ArrowIcon dir="right" /></StripIcon>
              <StripIcon style={{ color: "#d8d8d8" }}><EndIcon /></StripIcon>
              <ActionBtn $w={109} $ml={4} $bg="#068fb5">Share</ActionBtn>
              <ActionBtn $w={85} $ml={8} $bg="#60a41f">Simulate</ActionBtn>
              <ActionBtn $w={25} $ml={1} $bg="#60a41f"><GearIcon /></ActionBtn>
            </StripTools>
          </TabStrip>
          <CanvasGrid>
            <HorizontalRuler />
            <VerticalRuler />
            <Stage>
              <Page>
                {fields.map((f) => (
                  <Field key={f.text} $x={f.x} $y={f.y} $w={f.w} $h={f.h}>{f.text}</Field>
                ))}
                <PageButton $x={414} $y={488} $w={154} $h={31}>Compare to similiar jobs</PageButton>
                <PageButton $x={441} $y={576} $w={100} $h={24}>Post Job</PageButton>
              </Page>
              <PageSize>1024 x 768</PageSize>
            </Stage>
            <VScroll />
            <HScroll />
            <ScrollCorner />
          </CanvasGrid>
          <Handle $top={484} $left={1422} $w={12} $bg="#47484d">
            <svg width="6" height="10" viewBox="0 0 6 10" fill="none" stroke="#b5b5b5" strokeWidth="1.200"><path d="M1 1l4 4-4 4" /></svg>
          </Handle>
        </Centre>

        <RightPanel>
          <PanelTabBar $h={41}><PanelTab $w={57} $pl={9}>Outline</PanelTab></PanelTabBar>
          <SmallBar $line $h={27}>
            <BarIcon $w={14} $ml={226} style={{ color: "#66676b" }}><ArrowIcon dir="up" /></BarIcon>
            <BarIcon $w={14} $ml={7} style={{ color: "#66676b" }}><ArrowIcon dir="down" /></BarIcon>
          </SmallBar>
          <OutlineBody>
            <OutlineRow>
              <EyeSlot><EyeIcon /></EyeSlot>
              <MarkSlot><Chev c={TEAL} s={8} /></MarkSlot>
              <KindSlot><MonitorIcon /></KindSlot>
              Job posting page
            </OutlineRow>
            {outline.map((name) => (
              <OutlineRow key={name}>
                <EyeSlot><EyeIcon /></EyeSlot>
                <MarkSlot><CheckMark /></MarkSlot>
                <KindSlot />
                {name}
              </OutlineRow>
            ))}
          </OutlineBody>
        </RightPanel>
      </Main>

      <TaskStrip>
        <TaskItem $c="#6fd8a0" />
        <TaskItem $c="#8fa9b8" />
        <TaskItem $c="#8fa9b8" />
        <TaskItem $c="#8fa9b8" />
        <TaskItem $c="#dfe6ea" />
      </TaskStrip>
    </Shell>
  );
}
